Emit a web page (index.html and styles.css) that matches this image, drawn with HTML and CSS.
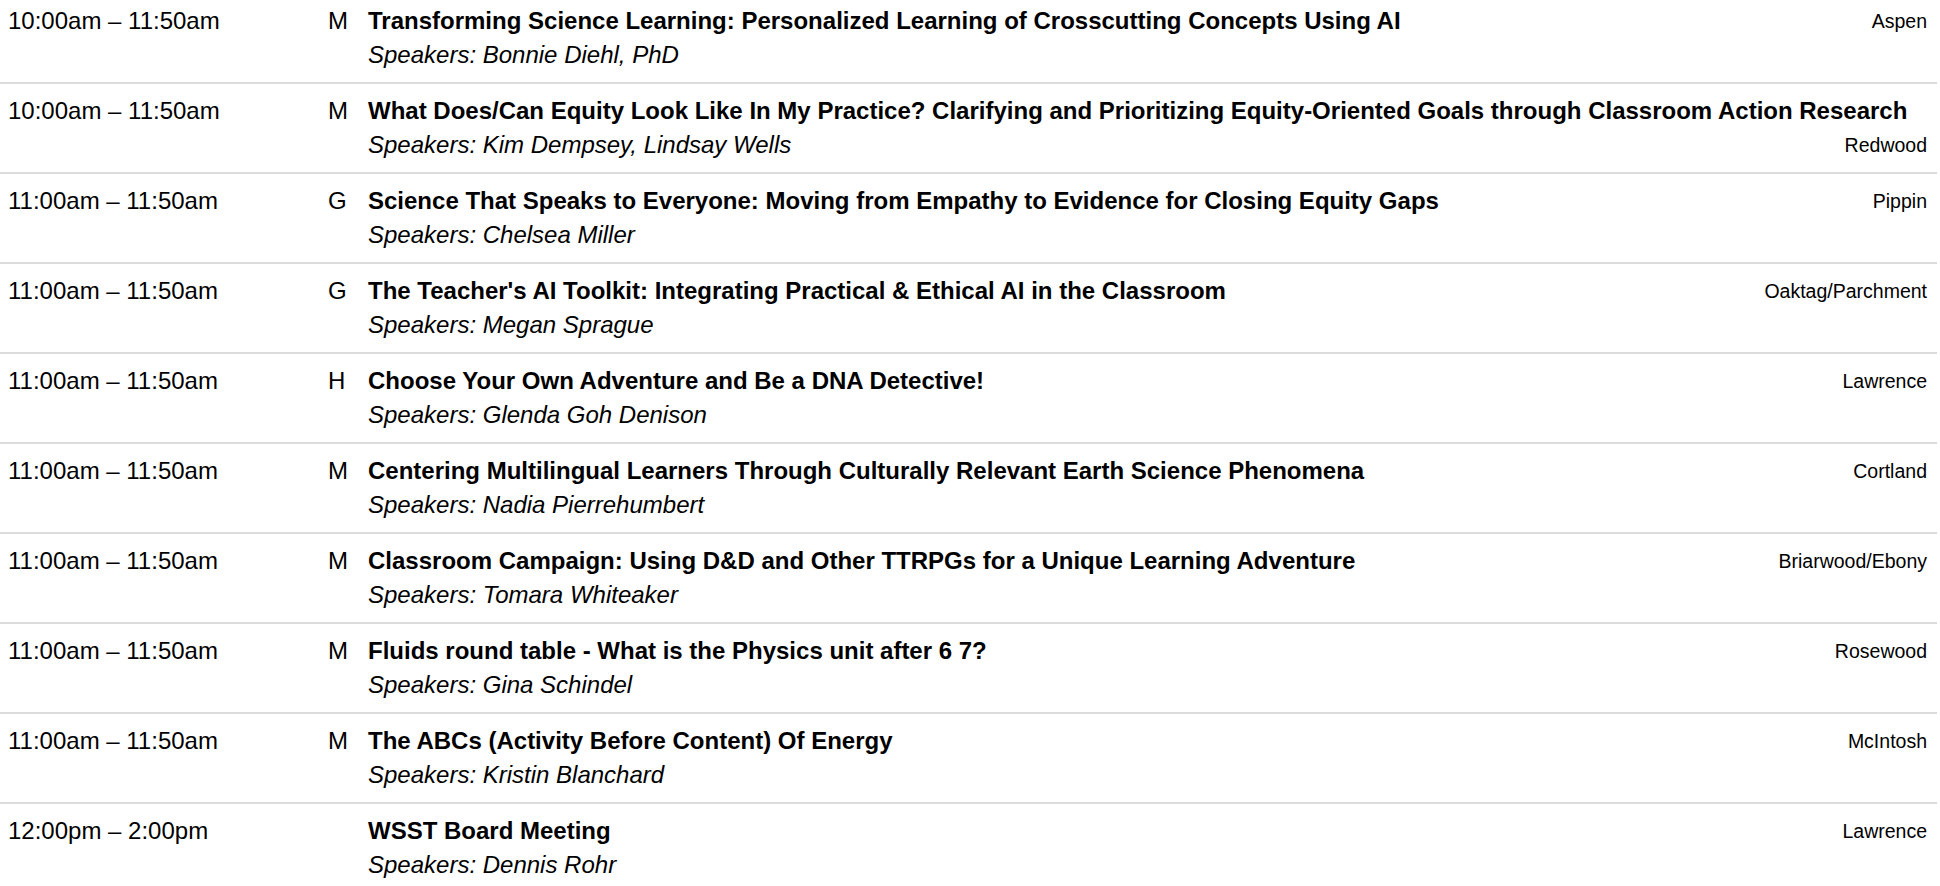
FILE: index.html
```html
<!DOCTYPE html>
<html lang="en">
<head>
<meta charset="utf-8">
<title>Schedule</title>
<link rel="stylesheet" href="styles.css">
</head>
<body>
<div class="schedule">
  <div class="session">
    <div class="time">10:00am – 11:50am</div>
    <div class="track">M</div>
    <div class="main"><span class="title">Transforming Science Learning: Personalized Learning of Crosscutting Concepts Using AI</span><span class="room">Aspen</span><div class="speakers">Speakers: Bonnie Diehl, PhD</div></div>
  </div>
  <div class="session">
    <div class="time">10:00am – 11:50am</div>
    <div class="track">M</div>
    <div class="main"><span class="title">What Does/Can Equity Look Like In My Practice? Clarifying and Prioritizing Equity-Oriented Goals through Classroom Action Research</span><span class="room">Redwood</span><div class="speakers">Speakers: Kim Dempsey, Lindsay Wells</div></div>
  </div>
  <div class="session">
    <div class="time">11:00am – 11:50am</div>
    <div class="track">G</div>
    <div class="main"><span class="title">Science That Speaks to Everyone: Moving from Empathy to Evidence for Closing Equity Gaps</span><span class="room">Pippin</span><div class="speakers">Speakers: Chelsea Miller</div></div>
  </div>
  <div class="session">
    <div class="time">11:00am – 11:50am</div>
    <div class="track">G</div>
    <div class="main"><span class="title">The Teacher's AI Toolkit: Integrating Practical &amp; Ethical AI in the Classroom</span><span class="room">Oaktag/Parchment</span><div class="speakers">Speakers: Megan Sprague</div></div>
  </div>
  <div class="session">
    <div class="time">11:00am – 11:50am</div>
    <div class="track">H</div>
    <div class="main"><span class="title">Choose Your Own Adventure and Be a DNA Detective!</span><span class="room">Lawrence</span><div class="speakers">Speakers: Glenda Goh Denison</div></div>
  </div>
  <div class="session">
    <div class="time">11:00am – 11:50am</div>
    <div class="track">M</div>
    <div class="main"><span class="title">Centering Multilingual Learners Through Culturally Relevant Earth Science Phenomena</span><span class="room">Cortland</span><div class="speakers">Speakers: Nadia Pierrehumbert</div></div>
  </div>
  <div class="session">
    <div class="time">11:00am – 11:50am</div>
    <div class="track">M</div>
    <div class="main"><span class="title">Classroom Campaign: Using D&amp;D and Other TTRPGs for a Unique Learning Adventure</span><span class="room">Briarwood/Ebony</span><div class="speakers">Speakers: Tomara Whiteaker</div></div>
  </div>
  <div class="session">
    <div class="time">11:00am – 11:50am</div>
    <div class="track">M</div>
    <div class="main"><span class="title">Fluids round table - What is the Physics unit after 6 7?</span><span class="room">Rosewood</span><div class="speakers">Speakers: Gina Schindel</div></div>
  </div>
  <div class="session">
    <div class="time">11:00am – 11:50am</div>
    <div class="track">M</div>
    <div class="main"><span class="title">The ABCs (Activity Before Content) Of Energy</span><span class="room">McIntosh</span><div class="speakers">Speakers: Kristin Blanchard</div></div>
  </div>
  <div class="session">
    <div class="time">12:00pm – 2:00pm</div>
    <div class="track"></div>
    <div class="main"><span class="title">WSST Board Meeting</span><span class="room">Lawrence</span><div class="speakers">Speakers: Dennis Rohr</div></div>
  </div>
</div>
</body>
</html>
```

FILE: styles.css
```css
html, body {
  margin: 0;
  padding: 0;
  background: #ffffff;
}

body {
  font-family: "Liberation Sans", Arial, Helvetica, sans-serif;
  color: #000000;
  font-size: 24px;
  line-height: 34px;
}

.schedule {
  width: 1937px;
  margin-top: -6px;
}

.session {
  display: grid;
  grid-template-columns: 320px 40px 1fr;
  padding: 10px 10px 10px 8px;
  border-bottom: 2px solid #dcdcdc;
}

.time {
  white-space: nowrap;
}

.track {
  text-align: left;
}

.title {
  font-weight: bold;
}

.room {
  float: right;
  font-size: 19.5px;
  line-height: 34px;
}

.speakers {
  font-style: italic;
}
```
